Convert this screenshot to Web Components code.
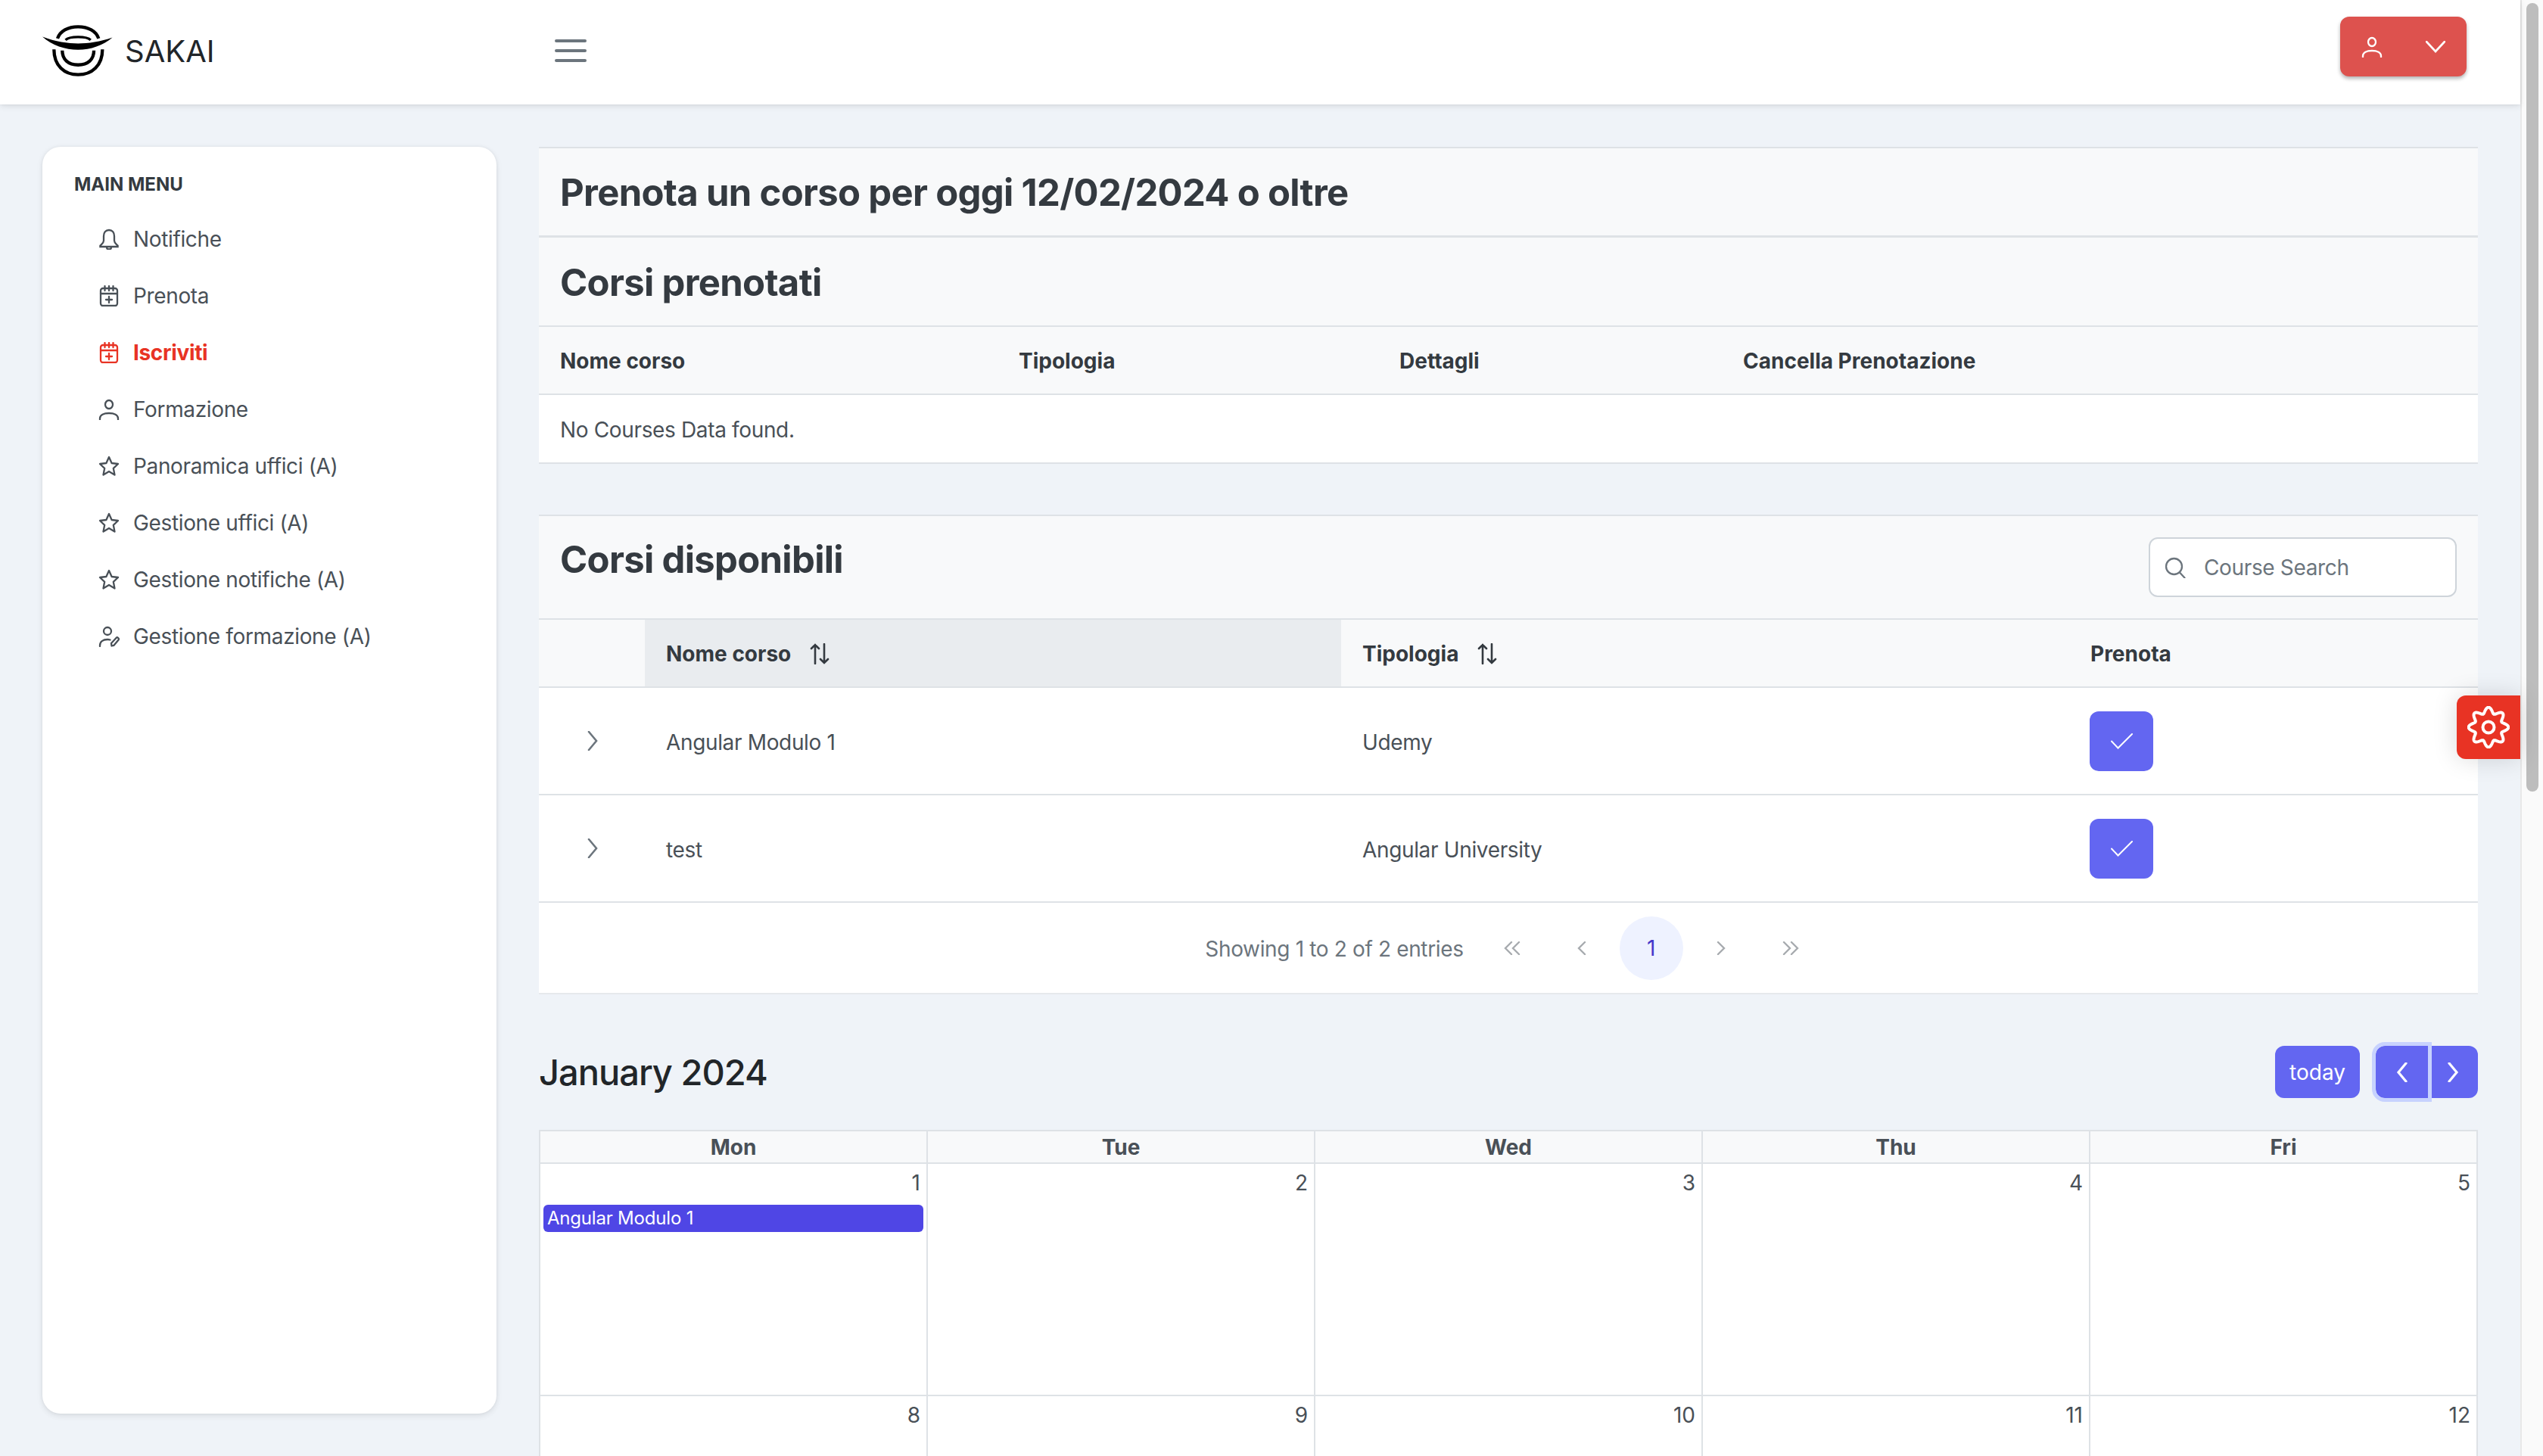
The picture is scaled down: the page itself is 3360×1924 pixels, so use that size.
<!DOCTYPE html>
<html lang="it">
<head>
<meta charset="utf-8">
<title>Sakai</title>
<style>
  html, body { margin: 0; height: 100%; overflow: hidden; }
  body { font-family: Inter, "Liberation Sans", sans-serif; font-size: 28px; letter-spacing: -.35px; color: #495057; background: #eff3f8; }
</style>
</head>
<body>
<app-shell>
  <app-topbar slot="top"></app-topbar>
  <app-sidebar slot="side">
    <menu-item icon="bell">Notifiche</menu-item>
    <menu-item icon="calplus">Prenota</menu-item>
    <menu-item icon="calplus" active>Iscriviti</menu-item>
    <menu-item icon="user">Formazione</menu-item>
    <menu-item icon="star">Panoramica uffici (A)</menu-item>
    <menu-item icon="star">Gestione uffici (A)</menu-item>
    <menu-item icon="star">Gestione notifiche (A)</menu-item>
    <menu-item icon="useredit">Gestione formazione (A)</menu-item>
  </app-sidebar>

  <panel-title big>Prenota un corso per oggi 12/02/2024 o oltre</panel-title>
  <panel-title>Corsi prenotati</panel-title>
  <table-row head columns="606px 503px 454px 1fr">
    <span>Nome corso</span><span>Tipologia</span><span>Dettagli</span><span>Cancella Prenotazione</span>
  </table-row>
  <table-row columns="1fr" height="91">
    <span>No Courses Data found.</span>
  </table-row>

  <panel-title search style="margin-top:67px">Corsi disponibili</panel-title>
  <table-row head columns="140px 920px 962px 1fr">
    <span></span>
    <sort-head sorted>Nome corso</sort-head>
    <sort-head>Tipologia</sort-head>
    <span>Prenota</span>
  </table-row>
  <course-row tipologia="Udemy">Angular Modulo 1</course-row>
  <course-row tipologia="Angular University">test</course-row>
  <table-paginator></table-paginator>

  <month-calendar></month-calendar>

  <settings-tab slot="over"></settings-tab>
</app-shell>

<script>
const ICONS = {
  bell: '<path d="M14 2c-4.600 0-7 3.400-7 8v6c0 3-2.600 4.400-4.600 6.600V24h23.200v-1.400C23.600 20.400 21 19 21 16v-6c0-4.600-2.400-8-7-8z"/><path d="M11 24.500c0 1.900 1.300 3 3 3s3-1.100 3-3"/>',
  calplus: '<rect x="3" y="4" width="22" height="23" rx="3"/><path d="M3 11h22M8.500 1v6M14 1v6M19.500 1v6M14 15v8M10 19h8"/>',
  user: '<ellipse cx="14" cy="7.500" rx="5" ry="5.500"/><path d="M2 27.500v-1.500c0-4.500 5-7 12-7s12 2.500 12 7v1.500"/>',
  star: '<path d="M14 2l3.600 8 8.400 1-6.200 5.800 1.700 8.700L14 21l-7.500 4.500 1.700-8.700L2 11l8.400-1z" stroke-linejoin="round"/>',
  useredit: '<circle cx="12" cy="7" r="5"/><path d="M2 27v-1c0-5 4-8 10-8 1.500 0 2.500.2 3.500.5"/><path d="M17.500 26.500l-.5-3.500 7-7.500c1-1 3.800 1.500 2.800 2.700l-6.300 7.600z" stroke-linejoin="round"/>',
  search: '<circle cx="12.500" cy="12.500" r="10.500"/><path d="M20 20.500l6.500 7"/>',
  check: '<path d="M1 10.500L9.500 19.500 28 1"/>',
  chevronRight: '<path d="M3 1l10 12L3 25"/>',
  chevronLeft: '<path d="M13 1L3 13l10 12"/>',
  chevronDown: '<path d="M1 1l12 13L25 1"/>',
  sort: '<path d="M8 27V2M3 7l5-5 5 5M20 1v25M15 21l5 5 5-5"/>',
  pageFirst: '<path d="M10 1L2 9l8 8M20 1l-8 8 8 8"/>',
  pageLast: '<path d="M2 1l8 8-8 8M12 1l8 8-8 8"/>',
  pagePrev: '<path d="M10 1L2 9l8 8"/>',
  pageNext: '<path d="M2 1l8 8-8 8"/>',
};

function icon(name, w, h, strokeWidth = 2.3) {
  return `<svg width="${w}" height="${h}" viewBox="0 0 ${w} ${h}" fill="none" stroke="currentColor" stroke-width="${strokeWidth}" stroke-linecap="round" style="display:block;flex:none">${ICONS[name]}</svg>`;
}

// scheletro della pagina: barra in alto, colonna menu, contenuto, scrollbar
class AppShell extends HTMLElement {
  connectedCallback() {
    this.attachShadow({ mode: 'open' });
    this.shadowRoot.innerHTML = `
      <style>
        :host { display: flex; height: 100vh; overflow: hidden; position: relative; }
        .page { flex: 1; min-width: 0; display: flex; flex-direction: column; }
        .body { flex: 1; min-height: 0; display: flex; gap: 56px; padding: 56px 56px 56px; overflow: hidden; }
        .content { flex: 1; min-width: 0; height: 2400px; }
        .scroll { flex: none; width: 30px; box-sizing: border-box; background: #fafafa; border-left: 2px solid #e8e8e8; padding: 4px 6px 0; }
        .thumb { width: 16px; height: 1042px; border-radius: 8px; background: #bdbdbd; }
      </style>
      <div class="page">
        <slot name="top"></slot>
        <div class="body">
          <slot name="side"></slot>
          <div class="content"><slot></slot></div>
        </div>
      </div>
      <div class="scroll"><div class="thumb"></div></div>
      <slot name="over"></slot>
    `;
  }
}

class AppTopbar extends HTMLElement {
  connectedCallback() {
    this.attachShadow({ mode: 'open' });
    this.shadowRoot.innerHTML = `
      <style>
        :host { display: flex; align-items: center; height: 138px; box-sizing: border-box; flex: none; background: #fff; position: relative; z-index: 1; letter-spacing: 0;
          box-shadow: 0 6px 10px rgba(0,0,0,.02), 0 0 4px rgba(0,0,0,.05), 0 2px 8px rgba(0,0,0,.08); padding: 0 71px 4px 56px; }
        .logo { display: flex; align-items: center; width: 677px; flex: none; }
        .name { font-size: 40px; font-weight: 400; color: #212529; margin-left: 16px; margin-top: 1px; }
        .burger { display: flex; flex-direction: column; gap: 9px; width: 42px; }
        .burger i { display: block; height: 4px; border-radius: 2px; background: #6c757d; }
        .user { margin-left: auto; align-self: flex-start; margin-top: 22px; width: 167px; height: 79px; box-sizing: border-box; border-radius: 12px; background: #dd524e; color: #fff;
          display: flex; align-items: center; padding: 0 28px; justify-content: space-between; box-shadow: 0 3px 5px rgba(0,0,0,.3); }
      </style>
      <div class="logo">
        <svg width="93" height="68" viewBox="48 68 280 205" fill="none" stroke="#000" style="flex:none">
          <path d="M108 122C118 92 150 75 190 75S262 92 272 122" stroke-width="13"/>
          <path d="M140 128C155 112 225 112 240 128" stroke-width="10"/>
          <path d="M48 115C100 135 150 142 190 142S280 135 327 118C290 150 240 167 190 167S85 150 48 115Z" fill="#000" stroke="none"/>
          <path d="M94 165C94 230 135 266 190 266S287 230 287 165" stroke-width="13"/>
          <path d="M127 170C127 205 150 227 190 227S253 205 253 170" stroke-width="13"/>
        </svg>
        <span class="name">SAKAI</span>
      </div>
      <div class="burger"><i></i><i></i><i></i></div>
      <div class="user">${icon('user', 28, 28)}${icon('chevronDown', 26, 16, 2.6)}</div>
    `;
  }
}

class AppSidebar extends HTMLElement {
  connectedCallback() {
    this.attachShadow({ mode: 'open' });
    this.shadowRoot.innerHTML = `
      <style>
        :host { display: block; width: 600px; flex: none; box-sizing: border-box; background: #fff; border-radius: 24px; padding: 35px 42px;
          box-shadow: 0 6px 10px rgba(0,0,0,.02), 0 0 4px rgba(0,0,0,.05), 0 2px 8px rgba(0,0,0,.08); }
        h5 { margin: 0 0 19px; font-size: 24px; line-height: 30px; font-weight: 700; letter-spacing: 0; color: #343a40; text-transform: uppercase; }
      </style>
      <h5>Main Menu</h5>
      <slot></slot>
    `;
  }
}

class MenuItem extends HTMLElement {
  connectedCallback() {
    this.attachShadow({ mode: 'open' });
    this.shadowRoot.innerHTML = `
      <style>
        :host { display: flex; align-items: center; height: 75px; padding-left: 32px; gap: 18px; color: #495057; }
        :host([active]) { color: #e83324; font-weight: 700; }
      </style>
      ${icon(this.getAttribute('icon'), 28, 28)}
      <span><slot></slot></span>
    `;
  }
}

class PanelTitle extends HTMLElement {
  connectedCallback() {
    this.attachShadow({ mode: 'open' });
    const hasSearch = this.hasAttribute('search');
    this.shadowRoot.innerHTML = `
      <style>
        :host { display: flex; justify-content: space-between; box-sizing: border-box; height: 118px; align-items: center; padding: 2px 28px 0;
          background: #f8f9fa; border-bottom: 2px solid #dee2e6; color: #343a40; font-weight: 700; font-size: 49px; letter-spacing: -.69px; }
        :host([big]) { height: 120px; border-top: 2px solid #dee2e6; border-bottom-width: 3px; }
        :host([search]) { height: 139px; border-top: 2px solid #dee2e6; align-items: flex-start; padding-top: 28px; }
        .search { display: flex; align-items: center; width: 407px; height: 79px; box-sizing: border-box; background: #fff; border: 2px solid #ced4da; border-radius: 12px;
          padding-left: 19px; gap: 24px; font-size: 28px; font-weight: 400; letter-spacing: -.35px; color: #6c757d; }
      </style>
      <span><slot></slot></span>
      ${hasSearch ? `<div class="search">${icon('search', 28, 28)}<span>Course Search</span></div>` : ''}
    `;
  }
}

// riga di tabella: griglia, le celle arrivano dallo slot
class TableRow extends HTMLElement {
  connectedCallback() {
    this.attachShadow({ mode: 'open' });
    const cols = this.getAttribute('columns') || '1fr';
    const height = this.getAttribute('height') || (this.hasAttribute('head') ? '90' : '142');
    this.shadowRoot.innerHTML = `
      <style>
        :host { display: grid; grid-template-columns: ${cols}; height: ${height}px; box-sizing: border-box; background: #fff; border-bottom: 2px solid #dee2e6; }
        :host([head]) { background: #f8f9fa; color: #343a40; font-weight: 700; letter-spacing: 0; }
        ::slotted(*) { display: flex; align-items: center; padding: 2px 0 0 28px; min-width: 0; }
      </style>
      <slot></slot>
    `;
  }
}

class SortHead extends HTMLElement {
  connectedCallback() {
    this.attachShadow({ mode: 'open' });
    this.shadowRoot.innerHTML = `
      <style>
        :host { display: flex; align-items: center; gap: 24px; }
        :host([sorted]) { background: #e9ecef; }
      </style>
      <span><slot></slot></span>
      ${icon('sort', 28, 28, 2.6)}
    `;
  }
}

class CourseRow extends HTMLElement {
  connectedCallback() {
    this.attachShadow({ mode: 'open' });
    const tipologia = this.getAttribute('tipologia');
    this.shadowRoot.innerHTML = `
      <style>
        :host { display: grid; grid-template-columns: 140px 920px 962px 1fr; height: 142px; box-sizing: border-box; background: #fff; border-bottom: 2px solid #dee2e6; }
        div { display: flex; align-items: center; padding-left: 28px; }
        .text { padding-top: 3px; }
        .toggle { padding-left: 63px; color: #6c757d; }
        button { width: 84px; height: 79px; padding: 0; margin-left: -1px; border: 0; border-radius: 12px; background: #6366f1; color: #fff; display: flex; align-items: center; justify-content: center; }
      </style>
      <div class="toggle">${icon('chevronRight', 16, 26, 2.6)}</div>
      <div class="text"><slot></slot></div>
      <div class="text">${tipologia}</div>
      <div><button>${icon('check', 29, 21, 2)}</button></div>
    `;
  }
}

class TablePaginator extends HTMLElement {
  connectedCallback() {
    this.attachShadow({ mode: 'open' });
    const nav = (name, w) => `<span class="nav">${icon(name, w, 18, 2.4)}</span>`;
    this.shadowRoot.innerHTML = `
      <style>
        :host { display: flex; align-items: center; justify-content: center; height: 121px; box-sizing: border-box; background: #fff; border-bottom: 2px solid #e6e9ec;
          color: #6c757d; padding-left: 18px; }
        .report { margin-right: 18px; padding-top: 2px; }
        .nav, .page { width: 84px; height: 84px; margin: 0 4px; display: flex; align-items: center; justify-content: center; border-radius: 50%; }
        .nav { color: #a7abaf; }
        .page { background: #eef2ff; color: #4338ca; }
      </style>
      <span class="report">Showing 1 to 2 of 2 entries</span>
      ${nav('pageFirst', 22)}${nav('pagePrev', 12)}
      <span class="page">1</span>
      ${nav('pageNext', 12)}${nav('pageLast', 22)}
    `;
  }
}

class MonthCalendar extends HTMLElement {
  connectedCallback() {
    this.attachShadow({ mode: 'open' });
    const days = ['Mon', 'Tue', 'Wed', 'Thu', 'Fri'];
    const head = days.map(d => `<div class="dow">${d}</div>`).join('');
    const cell = (n) => `<div class="day"><div class="num">${n}</div>${n === 1 ? '<div class="event">Angular Modulo 1</div>' : ''}</div>`;
    const weeks = [1, 2, 3, 4, 5, 8, 9, 10, 11, 12].map(cell).join('');
    this.shadowRoot.innerHTML = `
      <style>
        :host { display: block; letter-spacing: 0; }
        .toolbar { display: flex; align-items: center; height: 179px; box-sizing: border-box; padding-top: 26px; }
        h2 { margin: 0; flex: 1; font-size: 47px; font-weight: 500; letter-spacing: -1px; color: #212529; }
        button { font: inherit; color: #fff; background: #6366f1; border: 0; height: 69px; padding: 0; display: flex; align-items: center; justify-content: center; }
        .today { width: 112px; border-radius: 12px; margin-right: 21px; }
        .prev { width: 69px; border-radius: 12px 0 0 12px; outline: 5px solid #c7d2fe; position: relative; }
        .next { width: 66px; border-radius: 0 12px 12px 0; margin-left: 0; }
        .grid { display: grid; grid-template-columns: repeat(5, 1fr); border-top: 2px solid #dee2e6; border-left: 2px solid #dee2e6; }
        .dow, .day { border-right: 2px solid #dee2e6; border-bottom: 2px solid #dee2e6; box-sizing: border-box; min-width: 0; }
        .dow { height: 43px; background: #f8f9fa; text-align: center; font-weight: 700; line-height: 42px; }
        .day { height: 307px; background: #fff; padding: 6px 4px; }
        .num { text-align: right; padding-right: 4px; line-height: 38px; margin-bottom: 10px; }
        .event { height: 36px; box-sizing: border-box; border-radius: 6px; background: #4f46e5; color: #fff; font-size: 24px; letter-spacing: -.2px; line-height: 36px; padding-left: 5px; }
      </style>
      <div class="toolbar">
        <h2>January 2024</h2>
        <button class="today">today</button>
        <button class="prev">${icon('chevronLeft', 16, 26, 3.2)}</button>
        <button class="next">${icon('chevronRight', 16, 26, 3.2)}</button>
      </div>
      <div class="grid">${head}${weeks}</div>
    `;
  }
}

// linguetta impostazioni, sta sopra al contenuto
class SettingsTab extends HTMLElement {
  connectedCallback() {
    this.attachShadow({ mode: 'open' });
    // ruota a 8 denti disegnata in coordinate polari
    let d = '';
    for (let i = 0; i <= 192; i++) {
      const a = i / 192 * Math.PI * 2 - Math.PI / 2;
      const r = 22.500 + 3.800 * Math.cos(8 * (a + Math.PI / 2));
      d += (i ? 'L' : 'M') + (28 + r * Math.cos(a)).toFixed(2) + ' ' + (28 + r * Math.sin(a)).toFixed(2);
    }
    this.shadowRoot.innerHTML = `
      <style>
        :host { position: absolute; right: 30px; top: 919px; width: 84px; height: 84px; background: #e83324; border-radius: 12px 0 0 12px;
          display: flex; align-items: center; justify-content: center; color: #fff; box-shadow: 0 0 32px rgba(0,0,0,.15); }
      </style>
      <svg width="56" height="56" viewBox="0 0 56 56" fill="none" stroke="currentColor" stroke-width="4">
        <path d="${d}Z" stroke-linejoin="round"/><circle cx="28" cy="28" r="7.500"/>
      </svg>
    `;
  }
}

customElements.define('app-shell', AppShell);
customElements.define('app-topbar', AppTopbar);
customElements.define('app-sidebar', AppSidebar);
customElements.define('menu-item', MenuItem);
customElements.define('panel-title', PanelTitle);
customElements.define('table-row', TableRow);
customElements.define('sort-head', SortHead);
customElements.define('course-row', CourseRow);
customElements.define('table-paginator', TablePaginator);
customElements.define('month-calendar', MonthCalendar);
customElements.define('settings-tab', SettingsTab);
</script>
</body>
</html>
